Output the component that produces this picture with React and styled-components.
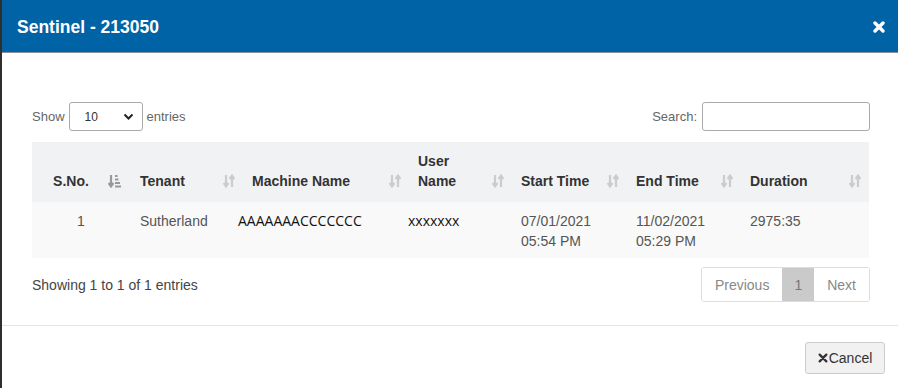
import styled, { createGlobalStyle } from "styled-components"

const Global = createGlobalStyle`
  html, body { margin: 0; padding: 0; background: #fff; }
  body { font-family: "Liberation Sans", Arial, sans-serif; }
`

const Modal = styled.div`
  width: 898px;
  height: 388px;
  box-sizing: border-box;
  border-left: 2px solid #2e2e2e;
  display: flex;
  flex-direction: column;
  background: #fff;
`

const Header = styled.div`
  height: 54px;
  background: #0063a6;
  border-bottom: 1px solid #8a9099;
  display: flex;
  align-items: center;
  justify-content: space-between;
  padding: 2px 13px 0 15px;
  box-sizing: border-box;
  color: #fff;
`

const Title = styled.h4`
  margin: 0;
  font-size: 17.5px;
  font-weight: bold;
  color: #fff;
`

const Body = styled.div`
  padding: 49px 28px 0 30px;
  flex: 1;
`

const Controls = styled.div`
  display: flex;
  justify-content: space-between;
  align-items: center;
  height: 29px;
  font-size: 13px;
  color: #666;
`

const Label = styled.label`
  display: flex;
  align-items: center;
  gap: 4px;
`

const SelectBox = styled.div`
  width: 74px;
  height: 29px;
  box-sizing: border-box;
  border: 1px solid #aaa;
  border-radius: 3px;
  display: flex;
  align-items: center;
  justify-content: space-between;
  padding: 0 8px 0 15px;
  font-size: 12px;
  color: #333;
`

const SearchInput = styled.input`
  width: 168px;
  height: 29px;
  box-sizing: border-box;
  border: 1px solid #aaa;
  border-radius: 3px;
  margin-left: 1px;
`

const Table = styled.table`
  margin-top: 11px;
  width: 837px;
  border-collapse: collapse;
  table-layout: fixed;
  font-size: 14px;
`

const Th = styled.th`
  background: #f1f2f4;
  color: #333;
  font-weight: bold;
  text-align: ${p => (p.$center ? "center" : "left")};
  vertical-align: bottom;
  line-height: 20px;
  padding: 9px 30px 11px 10px;
  position: relative;
`

const SortIcon = styled.span`
  position: absolute;
  right: ${p => p.$right || 7}px;
  bottom: 14px;
  display: flex;
`

const Td = styled.td`
  background: #f9f9f9;
  color: #555;
  line-height: 20px;
  vertical-align: top;
  padding: 9px 10px 7px ${p => (p.$flush ? 0 : 10)}px;
  text-align: ${p => (p.$center ? "center" : "left")};
`

const Mono = styled.span`
  font-family: "Open Sans", "Liberation Sans", sans-serif;
  font-size: 14px;
  color: #111;
  margin-left: ${p => p.$shift || 0}px;
`

const Footer = styled.div`
  display: flex;
  justify-content: space-between;
  align-items: center;
  margin-top: 9px;
  font-size: 14px;
  color: #444;
`

const Pager = styled.div`
  display: flex;
  height: 33px;
  border: 1px solid #ddd;
  border-radius: 3px;
  overflow: hidden;
`

const PageBtn = styled.span`
  display: flex;
  align-items: center;
  padding: 0 ${p => (p.$active ? 12 : 13)}px;
  font-size: 14px;
  color: ${p => (p.$active ? "#777" : "#888")};
  background: ${p => (p.$active ? "#cacaca" : "#fff")};
`

const Bottom = styled.div`
  border-top: 1px solid #e5e5e5;
  margin-top: 23px;
  height: 63px;
  display: flex;
  justify-content: flex-end;
  align-items: center;
  padding-right: 13px;
`

const CancelButton = styled.button`
  height: 32px;
  width: 80px;
  background: #f1f1f1;
  border: 1px solid #ccc;
  border-radius: 3px;
  font-family: "Liberation Sans", Arial, sans-serif;
  font-size: 14px;
  color: #333;
  display: flex;
  align-items: center;
  justify-content: center;
  gap: 1px;
  padding: 0;
  margin-top: 2px;
`

const CloseX = ({ size = 12, color = "#fff", stroke = 3.4 }) => (
  <svg width={size} height={size} viewBox="0 0 12 12">
    <path d="M2 2 L10 10 M10 2 L2 10" stroke={color} strokeWidth={stroke} strokeLinecap="round" />
  </svg>
)

const SortBoth = () => (
  <svg width="12" height="14" viewBox="0 0 12 14">
    <g stroke="#cccccc" strokeWidth="2.2" fill="none">
      <path d="M3 1 V12" />
      <path d="M0.6 9 L3 12.4 L5.4 9" />
      <path d="M9 13 V2" />
      <path d="M6.6 5 L9 1.6 L11.4 5" />
    </g>
  </svg>
)

const SortAsc = () => (
  <svg width="13" height="14" viewBox="0 0 13 14">
    <g stroke="#999999" strokeWidth="2.2" fill="none">
      <path d="M3 1 V12" />
      <path d="M0.6 9 L3 12.4 L5.4 9" />
    </g>
    <g fill="#999999">
      <rect x="7" y="1" width="2.5" height="2" />
      <rect x="7" y="4.5" width="3.5" height="2" />
      <rect x="7" y="8" width="5" height="2" />
      <rect x="7" y="11.5" width="6" height="2" />
    </g>
  </svg>
)

const Chevron = () => (
  <svg width="11" height="8" viewBox="0 0 11 8">
    <path d="M1.5 1.5 L5.5 5.5 L9.5 1.5" stroke="#222" strokeWidth="2" fill="none" />
  </svg>
)

const columns = [
  { key: "sno", label: "S.No.", width: 98, center: true, active: true, right: 9 },
  { key: "tenant", label: "Tenant", width: 112 },
  { key: "machine", label: "Machine Name", width: 166 },
  { key: "user", label: <>User<br />Name</>, width: 103 },
  { key: "start", label: "Start Time", width: 115 },
  { key: "end", label: "End Time", width: 114 },
  { key: "duration", label: "Duration", width: 129, right: 8 },
]

const App = () => {
  return (
    <Modal>
      <Global />
      <Header>
        <Title>Sentinel - 213050</Title>
        <CloseX />
      </Header>
      <Body>
        <Controls>
          <Label>
            Show
            <SelectBox>
              10 <Chevron />
            </SelectBox>
            entries
          </Label>
          <Label>
            Search:
            <SearchInput />
          </Label>
        </Controls>
        <Table>
          <colgroup>
            {columns.map(c => (
              <col key={c.key} style={{ width: c.width }} />
            ))}
          </colgroup>
          <thead>
            <tr>
              {columns.map(c => (
                <Th key={c.key} $center={c.center}>
                  {c.label}
                  <SortIcon $right={c.right}>{c.active ? <SortAsc /> : <SortBoth />}</SortIcon>
                </Th>
              ))}
            </tr>
          </thead>
          <tbody>
            <tr>
              <Td $center>1</Td>
              <Td>Sutherland</Td>
              <Td $flush><Mono $shift={-4}>AAAAAAACCCCCCC</Mono></Td>
              <Td $flush><Mono>xxxxxxx</Mono></Td>
              <Td>07/01/2021<br />05:54 PM</Td>
              <Td>11/02/2021<br />05:29 PM</Td>
              <Td>2975:35</Td>
            </tr>
          </tbody>
        </Table>
        <Footer>
          <span>Showing 1 to 1 of 1 entries</span>
          <Pager>
            <PageBtn>Previous</PageBtn>
            <PageBtn $active>1</PageBtn>
            <PageBtn>Next</PageBtn>
          </Pager>
        </Footer>
      </Body>
      <Bottom>
        <CancelButton>
          <CloseX size={10} color="#333" stroke={2.8} />
          Cancel
        </CancelButton>
      </Bottom>
    </Modal>
  )
}

export default App
